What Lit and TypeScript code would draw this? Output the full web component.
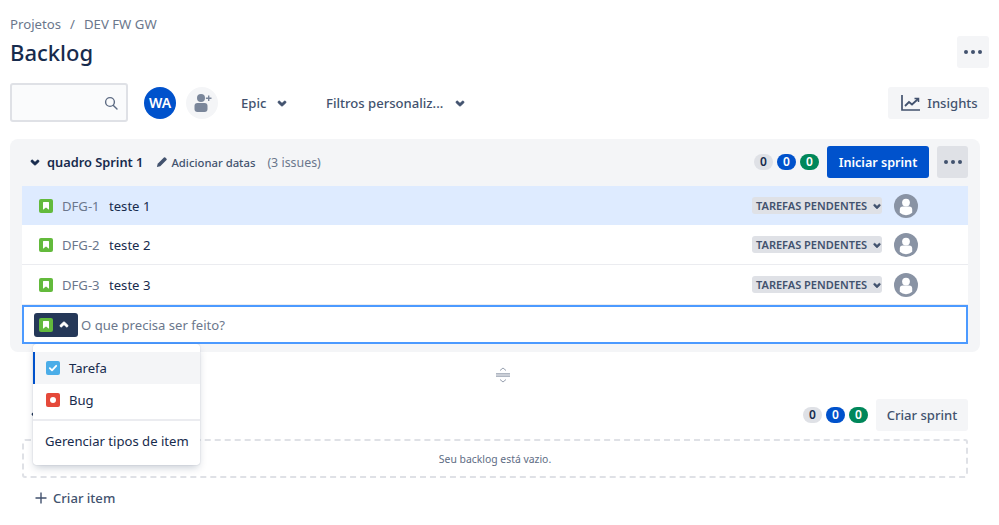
import { LitElement, html, css } from "lit";
import { customElement } from "lit/decorators.js";

const chevron = (size: number, up = false, color = "#42526e") => html`<svg width="${size}" height="${size}" viewBox="0 0 24 24" style="flex:none;transform:${up ? "rotate(180deg)" : "none"}"><path d="M8.3 10.3a1.2 1.2 0 0 1 1.7 0l2 2 2-2a1.2 1.2 0 1 1 1.7 1.7l-2.85 2.85a1.2 1.2 0 0 1-1.7 0L8.3 12a1.2 1.2 0 0 1 0-1.7z" fill="${color}" stroke="${color}" stroke-width="0.6"/></svg>`;
const dots = html`<svg width="24" height="24" viewBox="0 0 24 24" fill="#42526e"><circle cx="5" cy="12" r="2"/><circle cx="12" cy="12" r="2"/><circle cx="19" cy="12" r="2"/></svg>`;
const story = html`<svg width="14" height="14" viewBox="0 0 14 14" style="flex:none"><rect width="14" height="14" rx="2" fill="#63ba3c"/><path d="M4 3.5a.6.6 0 0 1 .6-.6h4.8a.6.6 0 0 1 .6.6v7.2L7 8.6l-3 2.1z" fill="#fff"/></svg>`;
const avatar = html`<svg width="24" height="24" viewBox="0 0 24 24"><circle cx="12" cy="12" r="12" fill="#8993a4"/><circle cx="12" cy="8.6" r="3.9" fill="#fff"/><path d="M5.8 15.6a3 3 0 0 1 3-3h6.4a3 3 0 0 1 3 3v3.2a9 9 0 0 1-12.4 0z" fill="#fff"/></svg>`;

@customElement("app-root")
export class AppRoot extends LitElement {
  static styles = css`
    :host { display: block; width: 999px; height: 525px; overflow: hidden; position: relative; background: #fff; font-family: "Noto Sans", "Open Sans", sans-serif; font-size: 13.1px; color: #172b4d; box-sizing: border-box; }
    * { box-sizing: border-box; }
    .page { padding: 15px 10px 0; display: flex; flex-direction: column; }
    .crumbs { display: flex; gap: 9px; color: #6b778c; height: 18px; align-items: center; line-height: 18px; font-size: 13.2px; }
    .title-row { display: flex; justify-content: space-between; align-items: center; margin-top: 3px; height: 32px; }
    h1 { margin: 0; font-size: 22px; font-weight: 500; line-height: 32px; color: #172b4d; }
    .sq { width: 32px; height: 32px; border-radius: 3px; background: #f4f5f7; display: flex; align-items: center; justify-content: center; }
    .tools { display: flex; align-items: center; margin-top: 15px; height: 39px; }
    .search { width: 118px; height: 39px; border: 2px solid #dfe1e6; border-radius: 3px; background: #fafbfc; display: flex; align-items: center; justify-content: flex-end; padding-right: 8px; }
    .wa { width: 32px; height: 32px; border-radius: 50%; background: #0052cc; color: #fff; font-weight: 600; font-size: 14px; display: flex; align-items: center; justify-content: center; margin-left: 16px; }
    .add { width: 32px; height: 32px; border-radius: 50%; background: #f4f5f7; display: flex; align-items: center; justify-content: center; margin-left: 10px; }
    .filter { display: flex; align-items: center; color: #42526e; font-weight: 500; }
    .filter.epic { margin-left: 23px; gap: 4px; width: 85px; }
    .filter.custom { gap: 5px; }
    .insights { margin-left: auto; height: 32px; width: 101px; border-radius: 3px; background: #f4f5f7; display: flex; align-items: center; justify-content: center; gap: 6px; padding-left: 2px; color: #42526e; font-weight: 500; }
    .sprint { margin-top: 17px; width: 970px; height: 213px; background: #f4f5f7; border-radius: 8px; padding: 7px 12px 0; }
    .s-head { height: 32px; display: flex; align-items: center; margin-bottom: 8px; }
    .s-head > svg { margin-left: 1px; }
    .s-name { font-weight: 600; font-size: 12.8px; }
    .s-add { display: flex; align-items: center; gap: 3px; margin-left: 13px; font-size: 11.3px; color: #42526e; font-weight: 500; }
    .s-count { margin-left: 12px; color: #6b778c; font-size: 12.4px; }
    .right { margin-left: auto; display: flex; align-items: center; }
    .badge { width: 19px; height: 16px; border-radius: 8px; margin-right: 4px; font-size: 12px; font-weight: 600; display: flex; align-items: center; justify-content: center; line-height: 16px; }
    .gray { background: #dfe1e6; color: #172b4d; }
    .blue { background: #0052cc; color: #fff; }
    .green { background: #00875a; color: #fff; }
    .start { height: 32px; width: 102px; margin: 0 8px 0 4px; border-radius: 3px; background: #0052cc; color: #fff; font-weight: 600; font-size: 12.6px; display: flex; align-items: center; justify-content: center; }
    .sq.dark { background: #dfe1e6; width: 31px; }
    .row { height: 40px; background: #fff; border-bottom: 1px solid #ebecf0; display: flex; align-items: center; padding-left: 17px; }
    .row.sel { height: 39px; background: #deebff; border-bottom: none; }
    .key { color: #6b778c; margin-left: 9px; width: 47px; }
    .lozenge { margin-left: auto; height: 17px; width: 130px; background: #dfe1e6; border-radius: 3px; font-size: 11px; font-weight: 600; color: #42526e; display: flex; align-items: center; padding-left: 4px; white-space: nowrap; }
    .lozenge svg { margin-left: auto; margin-right: -2px; }
    .av { margin: 0 50px 0 12px; display: flex; }
    .input { height: 39px; background: #fff; border: 2px solid #4c9aff; display: flex; align-items: center; padding-left: 10px; color: #6b778c; }
    .type { width: 44px; height: 24px; background: #253858; border-radius: 3px; display: flex; align-items: center; padding-left: 5px; margin-right: 3px; }
    .type svg:last-child { margin-left: -1px; }
    .handle { height: 47px; display: flex; align-items: center; justify-content: center; padding-left: 6px; padding-bottom: 1px; }
    .b-head { height: 32px; width: 958px; display: flex; align-items: center; padding-left: 14px; }
    .create { height: 32px; width: 92px; margin-left: 4px; border-radius: 3px; background: #f4f5f7; color: #42526e; font-weight: 500; display: flex; align-items: center; justify-content: center; }
    .empty { margin: 8px 0 0 12px; width: 946px; height: 39px; border: 2px dashed #dfe1e6; border-radius: 3px; display: flex; align-items: center; justify-content: center; font-size: 10.4px; color: #5e6c84; }
    .criar { display: flex; align-items: center; gap: 4px; margin: 10px 0 0 23px; height: 20px; color: #42526e; font-weight: 500; }
    .menu { position: absolute; left: 33px; top: 344px; width: 167px; height: 121px; background: #fff; border-radius: 3px; box-shadow: 0 4px 8px -2px rgba(9,30,66,.25), 0 0 1px rgba(9,30,66,.31); padding-top: 8px; }
    .item { height: 32px; display: flex; align-items: center; padding-left: 11px; gap: 9px; color: #172b4d; border-left: 2px solid transparent; }
    .item.on { background: #f4f5f7; border-left-color: #0052cc; }
    .item.bug { height: 31px; }
    .div { height: 2px; background: #ebecf0; margin-top: 4px; }
    .manage { height: 40px; display: flex; align-items: center; padding-left: 12px; white-space: nowrap; color: #172b4d; }
  `;

  private badges() {
    return html`<span class="badge gray">0</span><span class="badge blue">0</span><span class="badge green">0</span>`;
  }

  private row(key: string, name: string, sel = false) {
    return html`<div class="row ${sel ? "sel" : ""}">${story}<span class="key">${key}</span><span>${name}</span>
      <span class="lozenge">TAREFAS PENDENTES${chevron(20)}</span><span class="av">${avatar}</span></div>`;
  }

  render() {
    return html`<div class="page">
      <div class="crumbs"><span>Projetos</span><span>/</span><span>DEV FW GW</span></div>
      <div class="title-row"><h1>Backlog</h1><div class="sq">${dots}</div></div>
      <div class="tools">
        <div class="search"><svg width="14" height="14" viewBox="0 0 14 14" fill="none" stroke="#5e6c84" stroke-width="1.4"><circle cx="6" cy="6" r="4.4"/><path d="M9.4 9.4L13 13" stroke-linecap="round"/></svg></div>
        <div class="wa">WA</div>
        <div class="add"><svg width="24" height="24" viewBox="0 0 24 24" fill="#7a869a"><circle cx="11" cy="7" r="4"/><rect x="4.5" y="12" width="13" height="9" rx="3"/><path d="M18 4.5h1.4v2.1h2.1V8h-2.1v2.1H18V8h-2.1V6.6H18z"/></svg></div>
        <div class="filter epic"><span>Epic</span>${chevron(24)}</div>
        <div class="filter custom"><span>Filtros personaliz...</span>${chevron(24)}</div>
        <div class="insights"><svg width="20" height="20" viewBox="0 0 20 20" fill="none" stroke="#42526e" stroke-width="1.7"><path d="M1 2v15h18" /><path d="M4 13l4-4 3 2.5 6-5.5" stroke-width="1.8"/><path d="M13.5 5.5H17.5V9" stroke-width="1.5"/></svg><span>Insights</span></div>
      </div>
      <div class="sprint">
        <div class="s-head">${chevron(24, false, "#172b4d")}<span class="s-name">quadro Sprint 1</span>
          <span class="s-add"><svg width="12" height="12" viewBox="0 0 13 13" fill="#42526e"><path d="M1 12l.8-3.6L8.6 1.6a1 1 0 0 1 1.4 0l1.4 1.4a1 1 0 0 1 0 1.4L4.6 11.2z"/></svg>Adicionar datas</span>
          <span class="s-count">(3 issues)</span>
          <div class="right">${this.badges()}<div class="start">Iniciar sprint</div><div class="sq dark">${dots}</div></div>
        </div>
        ${this.row("DFG-1", "teste 1", true)}
        ${this.row("DFG-2", "teste 2")}
        ${this.row("DFG-3", "teste 3")}
        <div class="input"><span class="type">${story}${chevron(24, true, "#fff")}</span>O que precisa ser feito?</div>
      </div>
      <div class="handle"><svg width="16" height="16" viewBox="0 0 16 16" fill="none" stroke="#97a0af" stroke-width="1"><path d="M5 3.5L8 1l3 2.5M5 12.5L8 15l3-2.5"/><path d="M1 6.8h14M1 9.2h14" stroke-width="1.3"/></svg></div>
      <div class="b-head">${chevron(24, false, "#172b4d")}<div class="right">${this.badges()}<div class="create">Criar sprint</div></div></div>
      <div class="empty">Seu backlog está vazio.</div>
      <div class="criar"><svg width="16" height="16" viewBox="0 0 16 16" stroke="#42526e" stroke-width="1.4"><path d="M8 2.5v11M2.5 8h11"/></svg><span>Criar item</span></div>
    </div>
    <div class="menu">
      <div class="item on"><svg width="14" height="14" viewBox="0 0 14 14"><rect width="14" height="14" rx="2" fill="#4bade8"/><path d="M3.8 7.2l2.2 2.2 4.2-4.6" fill="none" stroke="#fff" stroke-width="1.8" stroke-linecap="round" stroke-linejoin="round"/></svg><span>Tarefa</span></div>
      <div class="item bug"><svg width="14" height="14" viewBox="0 0 14 14"><rect width="14" height="14" rx="2" fill="#e5493a"/><circle cx="7" cy="7" r="3" fill="#fff"/></svg><span>Bug</span></div>
      <div class="div"></div>
      <div class="manage">Gerenciar tipos de item</div>
    </div>`;
  }
}
